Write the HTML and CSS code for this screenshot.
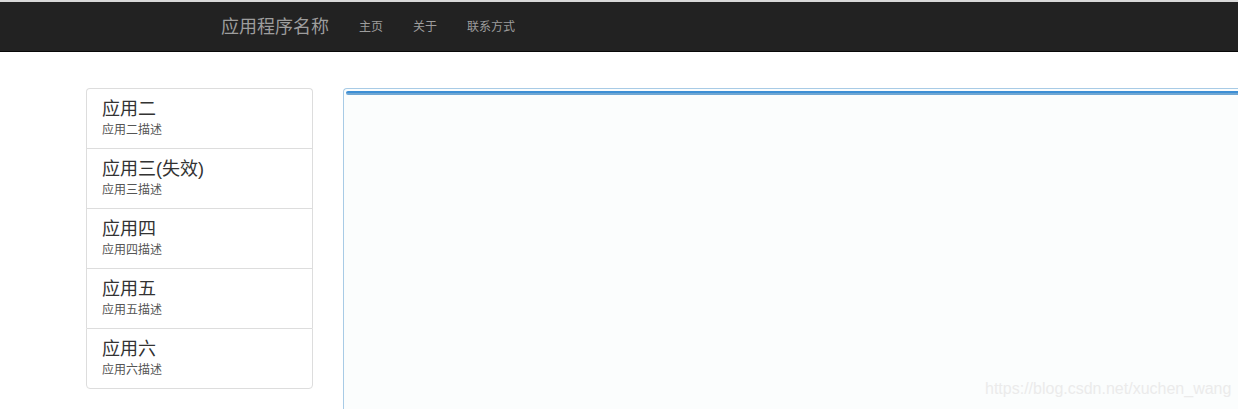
FILE: index.html
```html
<!DOCTYPE html>
<html lang="zh-CN">
<head>
<meta charset="utf-8">
<title>应用程序名称</title>
<link rel="stylesheet" href="styles.css">
</head>
<body>
<div class="topline"></div>
<nav class="navbar">
  <a class="brand" href="#">应用程序名称</a>
  <a class="nav-link" href="#">主页</a>
  <a class="nav-link" href="#">关于</a>
  <a class="nav-link" href="#">联系方式</a>
</nav>
<main class="main">
  <ul class="list-group">
    <li class="item"><div class="title">应用二</div><div class="desc">应用二描述</div></li>
    <li class="item"><div class="title">应用三(失效)</div><div class="desc">应用三描述</div></li>
    <li class="item"><div class="title">应用四</div><div class="desc">应用四描述</div></li>
    <li class="item"><div class="title">应用五</div><div class="desc">应用五描述</div></li>
    <li class="item"><div class="title">应用六</div><div class="desc">应用六描述</div></li>
  </ul>
  <section class="frame">
    <div class="bar"></div>
  </section>
</main>
<div class="watermark">https://blog.csdn.net/xuchen_wang</div>
</body>
</html>
```

FILE: styles.css
```css
html, body {
  margin: 0;
  padding: 0;
  height: 409px;
  overflow: hidden;
  background: #fff;
  font-family: "Liberation Sans", "Noto Sans CJK SC", sans-serif;
  color: #333;
}
.topline {
  height: 2px;
  background: #d9d9d9;
}
.navbar {
  height: 49px;
  background: #222;
  border-bottom: 1px solid #080808;
  display: flex;
  align-items: center;
  padding-left: 206px;
}
.brand {
  font-size: 18px;
  color: #9d9d9d;
  text-decoration: none;
  padding: 0 15px;
  line-height: 20px;
}
.nav-link {
  font-size: 12px;
  color: #9d9d9d;
  text-decoration: none;
  padding: 0 15px;
  line-height: 20px;
}
.main {
  display: flex;
  align-items: flex-start;
  padding-top: 36px;
  padding-left: 86px;
  gap: 30px;
}
.list-group {
  list-style: none;
  margin: 0;
  padding: 0;
  width: 227px;
  flex: none;
}
.item {
  height: 60px;
  box-sizing: border-box;
  border: 1px solid #ddd;
  border-bottom: none;
  padding: 9px 15px 0;
}
.item:first-child {
  border-radius: 4px 4px 0 0;
}
.item:last-child {
  border-bottom: 1px solid #ddd;
  border-radius: 0 0 4px 4px;
  height: 61px;
}
.title {
  font-size: 18px;
  line-height: 22px;
  color: #333;
}
.desc {
  font-size: 12px;
  line-height: 18px;
  margin-top: 1px;
  color: #555;
}
.frame {
  flex: 1;
  height: 340px;
  margin-right: -10px;
  border: 1px solid #a8cbe6;
  border-right: none;
  border-radius: 4px 0 0 0;
  background: #fbfdfd;
  padding: 2px 0 0 2px;
}
.bar {
  height: 4px;
  border-radius: 2px 0 0 2px;
  background: linear-gradient(#3d8fd5 0, #3d8fd5 50%, #6ea6d3 50%, #6ea6d3 100%);
}
.watermark {
  position: absolute;
  left: 985px;
  top: 380px;
  font-size: 16px;
  color: #ebebeb;
  font-family: "Liberation Sans", sans-serif;
}
```
